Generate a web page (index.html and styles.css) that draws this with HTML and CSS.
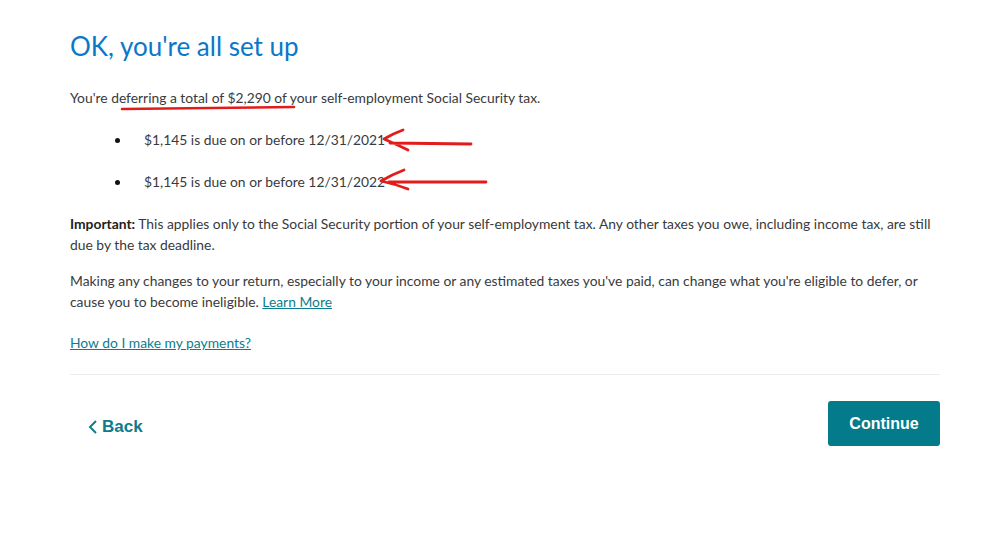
FILE: index.html
```html
<!DOCTYPE html>
<html lang="en">
<head>
    <meta charset="UTF-8">
    <title>Deferral set up</title>
    <link rel="stylesheet" href="styles.css">
</head>
<body>
    <div class="page">
        <h1 class="title">OK, you're all set up</h1>

        <p class="intro">You're <span class="marked">deferring a total of $2,290 of your<svg class="scribble" width="176" height="6" viewBox="0 0 176 6"><path d="M2 4 Q80 3.4 174 2" fill="none" stroke="#e41b1b" stroke-width="2.6" stroke-linecap="round"/></svg></span> self-employment Social Security tax.</p>

        <ul class="dues">
            <li><span class="due">$1,145 is due on or before 12/31/2021</span>
                <svg class="arrow arrow-one" width="96" height="28" viewBox="0 0 96 28">
                    <path d="M25 4 Q14 8 6 13 Q18 18 30 24 M12 17 L93 18" fill="none" stroke="#e41b1b" stroke-width="2.8" stroke-linecap="round" stroke-linejoin="round"/>
                </svg>
            </li>
            <li><span class="due">$1,145 is due on or before 12/31/2022</span>
                <svg class="arrow arrow-two" width="118" height="28" viewBox="0 0 118 28">
                    <path d="M33 4 Q20 9 10 15 Q24 18 37 23 M18 16 L115 16" fill="none" stroke="#e41b1b" stroke-width="2.8" stroke-linecap="round" stroke-linejoin="round"/>
                </svg>
            </li>
        </ul>

        <p class="text"><strong>Important:</strong> This applies only to the Social Security portion of your self-employment tax. Any other taxes you owe, including income tax, are still due by the tax deadline.</p>

        <p class="text">Making any changes to your return, especially to your income or any estimated taxes you've paid, can change what you're eligible to defer, or cause you to become ineligible. <a href="#" class="link">Learn More</a></p>

        <p class="help"><a href="#" class="link">How do I make my payments?</a></p>

        <div class="actions">
            <button class="back">
                <svg width="10" height="16" viewBox="0 0 10 16"><path d="M8 2 L2 8 L8 14" fill="none" stroke="#0e7c8c" stroke-width="2"/></svg>
                Back
            </button>
            <button class="continue">Continue</button>
        </div>
    </div>
</body>
</html>
```

FILE: styles.css
```css
body {
    margin: 0;
    font-family: 'Lato', 'Noto Sans', sans-serif;
    color: #393a3d;
    background: #fff;
}

.page {
    width: 870px;
    padding: 28px 0 0 70px;
}

.title {
    margin: 0;
    font-size: 26px;
    font-weight: 400;
    color: #0a77c9;
    line-height: 36px;
}

.intro {
    margin: 24px 0 0;
    font-size: 13.85px;
    line-height: 20px;
}

.marked {
    position: relative;
}

/* hand drawn red marks laid over the text */
.scribble {
    position: absolute;
    left: 9px;
    top: 16px;
}

.dues {
    margin: 22px 0 0;
    padding-left: 61px;
    font-size: 13.85px;
}

.dues li {
    line-height: 20px;
    margin-bottom: 22px;
    padding-left: 13px;
    position: relative;
}

.dues li + li {
    margin-bottom: 21px;
}

.dues li::marker {
    color: #111;
}

.arrow {
    position: absolute;
}

.arrow-one {
    left: 247px;
    top: -4px;
}

.arrow-two {
    left: 240px;
    top: -6px;
}

.text {
    margin: 0 0 15px;
    font-size: 13.85px;
    line-height: 21px;
}

.text strong {
    font-weight: 700;
    color: #222;
}

.link {
    color: #0e7c8c;
    text-decoration: underline;
}

.help {
    margin: 21px 0 0;
    font-size: 13.85px;
    line-height: 20px;
}

.actions {
    margin-top: 21px;
    border-top: 1px solid #ececec;
    display: flex;
    justify-content: space-between;
    align-items: center;
    padding-top: 26px;
}

.back {
    margin-left: 18px;
    margin-top: 6px;
    background: none;
    border: none;
    color: #0e7c8c;
    font-family: 'Liberation Sans', Arial, sans-serif;
    font-size: 17px;
    font-weight: 700;
    display: flex;
    align-items: center;
    gap: 4px;
    padding: 0;
    cursor: pointer;
}

.continue {
    width: 112px;
    height: 45px;
    background: #047b8a;
    color: #fff;
    border: none;
    border-radius: 3px;
    font-family: 'Liberation Sans', Arial, sans-serif;
    font-size: 16px;
    font-weight: 700;
    cursor: pointer;
}
```
